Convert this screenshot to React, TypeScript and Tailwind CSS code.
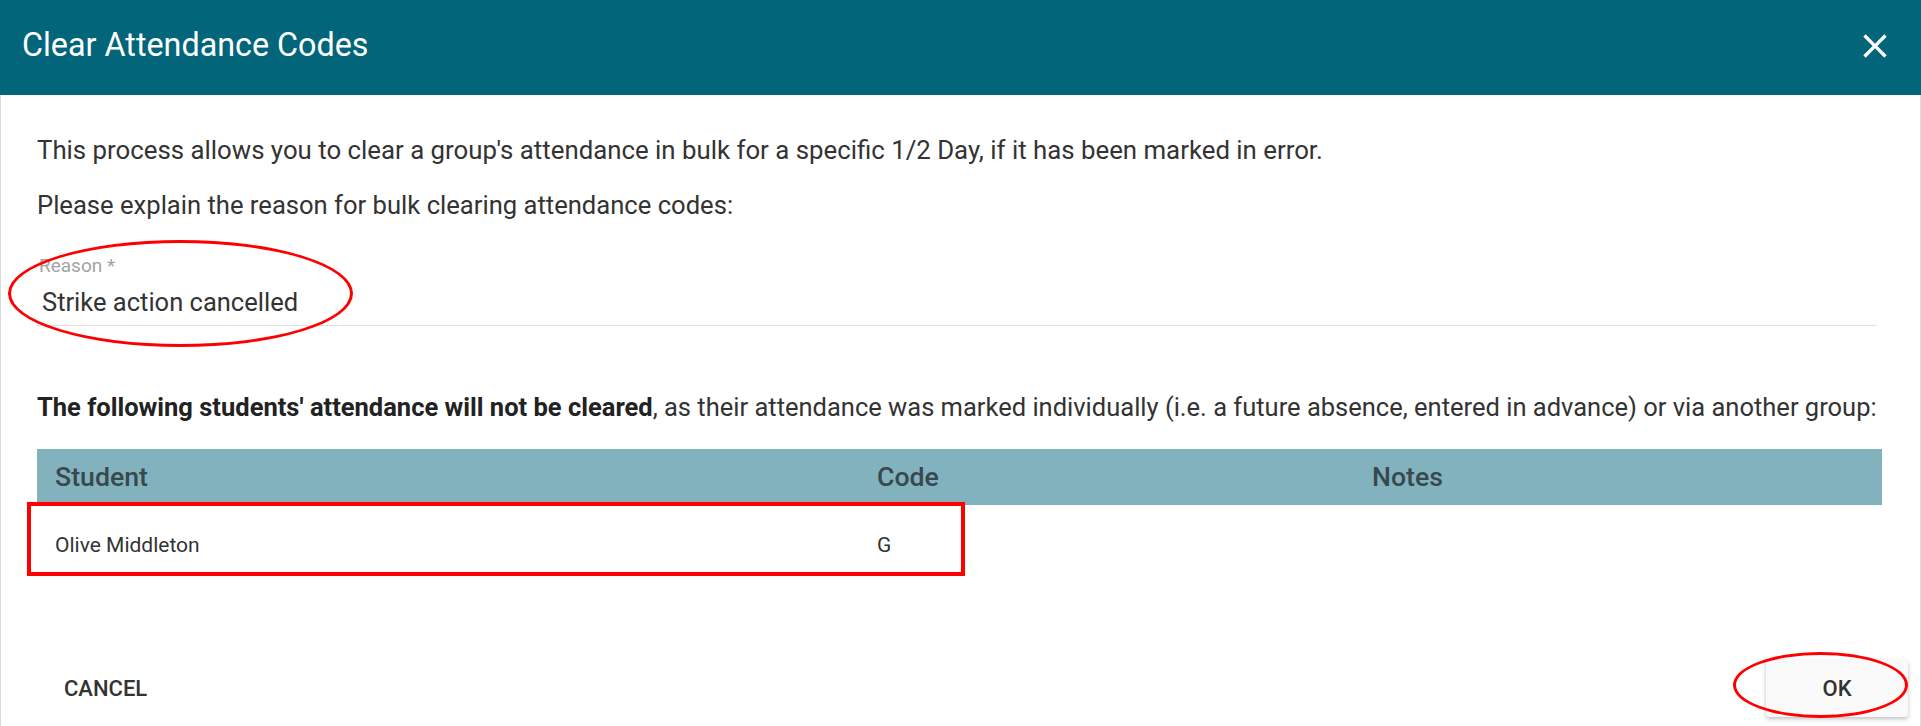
export default function App() {
  const rows = [{ student: "Olive Middleton", code: "G", notes: "" }];

  return (
    <div className="relative h-[726px] w-full overflow-hidden bg-white font-['Roboto',sans-serif] text-[#333]">
      {/* title bar */}
      <div className="flex h-[95px] items-center justify-between bg-[#02657a] pb-[4px] pl-[22px] pr-[26px]">
        <h1 className="text-[32.3px] font-normal leading-none text-white">Clear Attendance Codes</h1>
        <button aria-label="Close" className="text-white">
          <svg width="40" height="40" viewBox="0 0 24 24" fill="currentColor">
            <path d="M19 6.41 17.59 5 12 10.59 6.41 5 5 6.41 10.59 12 5 17.59 6.41 19 12 13.41 17.59 19 19 17.59 13.41 12z" />
          </svg>
        </button>
      </div>

      <div className="flex h-[631px] flex-col border-x border-[#dcdcdc]">
        <div className="pl-[36px] pr-[38px] pt-[37px]">
          <p className="text-[25.8px] leading-[36px]">
            This process allows you to clear a group's attendance in bulk for a specific 1/2 Day, if it has been marked in error.
          </p>
          <p className="mt-[19px] text-[25.6px] leading-[36px]">
            Please explain the reason for bulk clearing attendance codes:
          </p>

          <div className="mr-[5px] mt-[32px] border-b border-[#e0e0e0] pb-[5px]">
            <label className="block pl-[2px] text-[19px] leading-[22px] text-[#a3a3a3]">Reason *</label>
            <div className="mt-[7px] pl-[5px] text-[25.5px] leading-[36px] text-[#333]">Strike action cancelled</div>
          </div>

          <p className="mt-[63px] whitespace-nowrap text-[25.5px] leading-[36px]">
            <span className="font-bold text-[#222]">The following students' attendance will not be cleared</span>, as their attendance was marked individually (i.e. a future absence, entered in advance) or via another group:
          </p>

          <div className="mt-[24px]">
            <div className="grid h-[56px] grid-cols-[822px_495px_1fr] items-center bg-[#82b2be] text-[26.7px] font-medium text-[#37494e]">
              <div className="pl-[18px]">Student</div>
              <div className="pl-[18px]">Code</div>
              <div className="pl-[18px]">Notes</div>
            </div>
            {rows.map((r) => (
              <div key={r.student} className="grid h-[82px] grid-cols-[822px_495px_1fr] items-center text-[21px] text-[#333]">
                <div className="pl-[18px]">{r.student}</div>
                <div className="pl-[18px]">{r.code}</div>
                <div className="pl-[18px]">{r.notes}</div>
              </div>
            ))}
          </div>
        </div>

        <div className="mt-[73px] flex items-center justify-between pl-[26px] pr-[12px]">
          <button className="h-[57px] px-[37px] text-[22px] font-medium uppercase text-[#333]">Cancel</button>
          <button className="h-[57px] w-[142px] rounded-[3px] bg-[#fafafa] text-[22px] font-medium uppercase text-[#333] shadow-[0_2px_4px_rgba(0,0,0,0.25)]">
            OK
          </button>
        </div>
      </div>

      {/* red annotation marks */}
      <div className="pointer-events-none absolute left-[8px] top-[240px] h-[107px] w-[345px] rounded-[50%] border-[3px] border-[#f00]" />
      <div className="pointer-events-none absolute left-[27px] top-[502px] h-[74px] w-[938px] border-4 border-[#f00]" />
      <div className="pointer-events-none absolute left-[1733px] top-[652px] h-[66px] w-[175px] rounded-[50%] border-[3px] border-[#f00]" />
    </div>
  );
}
